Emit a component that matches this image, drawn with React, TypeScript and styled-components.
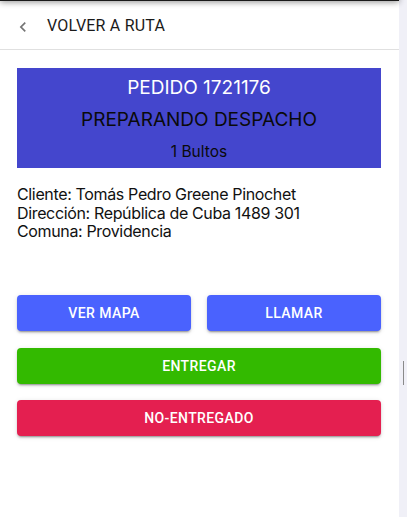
import React from "react";
import styled, { createGlobalStyle } from "styled-components";

const Global = createGlobalStyle`
  html, body { margin: 0; padding: 0; background: #ffffff; }
  body { font-family: Inter, "Noto Sans", sans-serif; }
  * { box-sizing: border-box; }
`;

const Page = styled.div`
  display: flex;
  width: 407px;
  height: 517px;
  overflow: hidden;
`;

const Main = styled.div`
  position: relative;
  width: 399px;
  height: 517px;
  background: #ffffff;
  display: flex;
  flex-direction: column;
`;

const TopShadow = styled.div`
  position: absolute;
  top: -6px;
  left: 0;
  right: 0;
  height: 7px;
  background: #1a1a1a;
  box-shadow: 0 1px 6px rgba(0, 0, 0, 0.45);
`;

const Header = styled.div`
  height: 50px;
  display: flex;
  align-items: center;
  padding: 2px 0 0 13px;
  border-bottom: 1px solid #e0e0e0;
`;

const BackIcon = styled.svg`
  width: 20px;
  height: 20px;
  fill: #757575;
  margin-right: 14px;
  margin-top: 3px;
`;

const HeaderTitle = styled.span`
  font-family: Roboto, sans-serif;
  font-size: 16px;
  color: #1a1a1a;
  letter-spacing: 0.2px;
`;

const Content = styled.div`
  padding: 18px 18px 0 17px;
  display: flex;
  flex-direction: column;
`;

const StatusCard = styled.div`
  height: 100px;
  background: #4446cd;
  display: flex;
  flex-direction: column;
  align-items: center;
  padding-top: 9px;
`;

const CardLine = styled.div<{ $size: number; $color: string; $h: number }>`
  font-size: ${(p) => p.$size}px;
  color: ${(p) => p.$color};
  height: ${(p) => p.$h}px;
  line-height: ${(p) => p.$h}px;
`;

const Info = styled.div`
  margin-top: 17px;
  font-size: 16px;
  line-height: 18.5px;
  letter-spacing: -0.35px;
  color: #111;
`;

const Actions = styled.div`
  margin-top: 54px;
  display: flex;
  flex-direction: column;
  gap: 16px;
`;

const Row = styled.div`
  display: flex;
  gap: 16px;
  margin-bottom: 1px;
`;

const Button = styled.button<{ $bg: string; $grow?: boolean }>`
  flex: ${(p) => (p.$grow ? "1 1 0" : "0 0 auto")};
  height: 36px;
  border: none;
  border-radius: 4px;
  background: ${(p) => p.$bg};
  color: #ffffff;
  font-family: Roboto, sans-serif;
  font-weight: 500;
  font-size: 14px;
  letter-spacing: 0.4px;
  text-transform: uppercase;
  box-shadow: 0 3px 1px -2px rgba(0, 0, 0, 0.2), 0 2px 2px 0 rgba(0, 0, 0, 0.14),
    0 1px 5px 0 rgba(0, 0, 0, 0.12);
  cursor: pointer;
`;

const Strip = styled.div`
  width: 8px;
  height: 517px;
  background: #f0f0f7;
  display: flex;
  flex-direction: column;
  padding-top: 361px;
  padding-left: 4px;
`;

const Thumb = styled.div`
  width: 1px;
  height: 24px;
  background: #8a8a8a;
`;

export default function App() {
  return (
    <>
      <Global />
      <Page>
        <Main>
          <TopShadow />
          <Header>
            <BackIcon viewBox="0 0 24 24">
              <path d="M15.41 7.41 14 6l-6 6 6 6 1.41-1.41L10.83 12z" />
            </BackIcon>
            <HeaderTitle>VOLVER A RUTA</HeaderTitle>
          </Header>
          <Content>
            <StatusCard>
              <CardLine $size={19} $color="#ffffff" $h={22}>PEDIDO 1721176</CardLine>
              <CardLine $size={19} $color="#0a0a0a" $h={42}>PREPARANDO DESPACHO</CardLine>
              <CardLine $size={15.5} $color="#0a0a0a" $h={22}>1 Bultos</CardLine>
            </StatusCard>
            <Info>
              <div>Cliente: Tomás Pedro Greene Pinochet</div>
              <div>Dirección: República de Cuba 1489 301</div>
              <div>Comuna: Providencia</div>
            </Info>
            <Actions>
              <Row>
                <Button $bg="#4a62fe" $grow>Ver mapa</Button>
                <Button $bg="#4a62fe" $grow>Llamar</Button>
              </Row>
              <Button $bg="#33ba00">Entregar</Button>
              <Button $bg="#e41f50">No-entregado</Button>
            </Actions>
          </Content>
        </Main>
        <Strip>
          <Thumb />
        </Strip>
      </Page>
    </>
  );
}
